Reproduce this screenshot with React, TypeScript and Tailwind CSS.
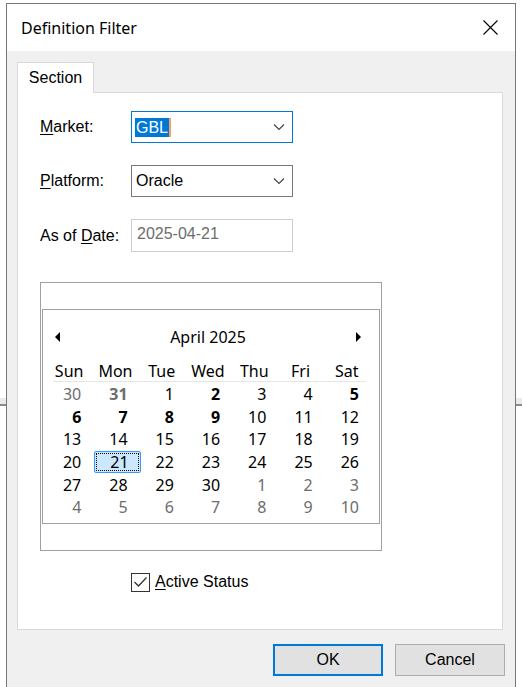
import React from 'react'

type Day = { n: number; muted?: boolean; bold?: boolean; selected?: boolean }

const WEEKDAYS = ['Sun', 'Mon', 'Tue', 'Wed', 'Thu', 'Fri', 'Sat']

// April 2025 laid out as the month view shows it (6 weeks)
const buildMonth = (): Day[] => {
  const days: Day[] = [{ n: 30, muted: true }, { n: 31, muted: true, bold: true }]
  const boldDays = [2, 5, 6, 7, 8, 9]
  for (let i = 1; i <= 30; i++) {
    days.push({ n: i, bold: boldDays.includes(i), selected: i === 21 })
  }
  for (let i = 1; days.length < 42; i++) days.push({ n: i, muted: true })
  return days
}

const uiFont = { fontFamily: '"Liberation Sans", Arial, sans-serif' }
const segoe = { fontFamily: '"Noto Sans", "Open Sans", sans-serif' }

function Chevron() {
  return (
    <svg width="12" height="8" viewBox="0 0 12 8" className="shrink-0">
      <path d="M1 1.5 L6 6.5 L11 1.5" fill="none" stroke="#404040" strokeWidth="1.1" />
    </svg>
  )
}

function FieldLabel({ access, rest }: { access: string; rest: string }) {
  return (
    <span className="w-[91px] shrink-0 text-[16px] text-black">
      <u className="underline-offset-2">{access}</u>
      {rest}
    </span>
  )
}

function MonthCalendar() {
  const days = buildMonth()
  return (
    <div className="w-[342px] h-[269px] border border-[#a0a0a0] bg-white px-px py-[26px]">
      <div className="h-full border border-[#a0a0a0] bg-white pl-[3px]" style={segoe}>
        {/* header with month navigation */}
        <div className="mt-[16px] h-[22px] w-[324px] flex items-center justify-between px-[9px]">
          <svg width="6" height="10" viewBox="0 0 6 10">
            <path d="M5 0 L0 5 L5 10 Z" fill="#000" />
          </svg>
          <span className="text-[16px] text-black">April 2025</span>
          <svg width="6" height="10" viewBox="0 0 6 10">
            <path d="M1 0 L6 5 L1 10 Z" fill="#000" />
          </svg>
        </div>
        <div className="relative mt-[11px] w-[324px] grid grid-cols-7 h-[23px] items-center">
          {WEEKDAYS.map((d) => (
            <span key={d} className="text-center text-[16px] text-black leading-none">
              {d}
            </span>
          ))}
          <div className="absolute left-[7px] right-[4px] bottom-0 h-px bg-[#e6e6e6]" />
        </div>
        <div className="w-[324px] pt-px grid grid-cols-7 auto-rows-[22.6px]">
          {days.map((d, i) =>
            d.selected ? (
              <div key={i} className="ml-[2px] -mr-[2px] rounded-[2px] border border-[#3399ff] bg-[#cce8ff] p-px">
                <div className="h-full w-full border border-dotted border-black flex items-center justify-end pr-[9px] text-[16px] leading-none text-black">
                  {d.n}
                </div>
              </div>
            ) : (
              <div
                key={i}
                className={`flex items-center justify-end pr-[11px] text-[16px] leading-none ${
                  d.muted ? 'text-[#6d6d6d]' : 'text-black'
                } ${d.bold ? 'font-bold' : ''}`}
              >
                {d.n}
              </div>
            )
          )}
        </div>
      </div>
    </div>
  )
}

export default function App() {
  return (
    <div className="relative h-[687px] w-[522px] overflow-hidden bg-white">
      {/* window behind the dialog */}
      <div className="absolute left-0 right-0 top-[398px] h-[6px] bg-[#ebebeb]" />
      <div className="absolute left-0 right-0 top-[404px] h-[2px] bg-[#8a8a8a]" />

      <div className="relative ml-[6px] mt-[3px] w-[510px] h-[700px] border border-[#777777] bg-[#f0f0f0] flex flex-col" style={uiFont}>
        {/* title bar */}
        <div className="h-[47px] bg-white flex items-center justify-between pl-[14px] pr-[17px]">
          <span className="text-[16px] text-black" style={segoe}>
            Definition Filter
          </span>
          <svg width="15" height="15" viewBox="0 0 15 15">
            <path d="M0.5 0.5 L14.5 14.5 M14.5 0.5 L0.5 14.5" stroke="#000" strokeWidth="1.1" />
          </svg>
        </div>

        {/* tab strip */}
        <div className="pl-[10px] pt-[11px] flex">
          <div className="relative z-10 -mb-px w-[77px] h-[31px] border border-b-0 border-[#d9d9d9] bg-white flex items-center justify-center text-[16px] text-black">
            Section
          </div>
        </div>

        {/* tab page */}
        <div className="ml-[10px] w-[486px] h-[538px] border border-[#d9d9d9] bg-white pl-[22px] pt-[18px] flex flex-col">
          <div className="flex items-center h-[32px]">
            <FieldLabel access="M" rest="arket:" />
            <div className="w-[162px] h-[32px] border border-[#0078d7] flex items-center justify-between pl-[3px] pr-[7px]">
              <span className="flex items-center">
                <span className="bg-[#0078d7] text-white text-[16px] leading-[19px] px-px">GBL</span>
                <span className="w-[2px] h-[19px] bg-[#f3a55a]" />
              </span>
              <Chevron />
            </div>
          </div>

          <div className="mt-[22px] flex items-center h-[32px]">
            <FieldLabel access="P" rest="latform:" />
            <div className="w-[162px] h-[32px] border border-[#7a7a7a] flex items-center justify-between pl-[4px] pr-[7px]">
              <span className="text-[16px] text-black">Oracle</span>
              <Chevron />
            </div>
          </div>

          <div className="mt-[22px] flex items-center h-[33px]">
            <span className="w-[91px] shrink-0 text-[16px] text-black">
              As of <u className="underline-offset-2">D</u>ate:
            </span>
            <div className="w-[162px] h-[33px] border border-[#cccccc] flex items-center pl-[5px] pb-[3px]">
              <span className="text-[16px] text-[#6d6d6d]">2025-04-21</span>
            </div>
          </div>

          <div className="mt-[30px]">
            <MonthCalendar />
          </div>

          <div className="mt-[19px] ml-[91px] flex items-center gap-[5px]">
            <div className="w-[19px] h-[19px] border border-[#333333] bg-white flex items-center justify-center">
              <svg width="15" height="12" viewBox="0 0 15 12">
                <path d="M1.5 6 L5.5 10 L13.5 1.5" fill="none" stroke="#333333" strokeWidth="1.3" />
              </svg>
            </div>
            <span className="text-[16px] text-black">
              <u className="underline-offset-2">A</u>ctive Status
            </span>
          </div>
        </div>

        {/* dialog buttons */}
        <div className="mt-[14px] flex justify-end gap-[12px] pr-[10px]">
          <button className="w-[110px] h-[32px] border-2 border-[#0078d7] bg-[#e1e1e1] text-[16px] text-black">
            OK
          </button>
          <button className="w-[110px] h-[32px] border border-[#adadad] bg-[#e1e1e1] text-[16px] text-black">
            Cancel
          </button>
        </div>
      </div>
    </div>
  )
}
